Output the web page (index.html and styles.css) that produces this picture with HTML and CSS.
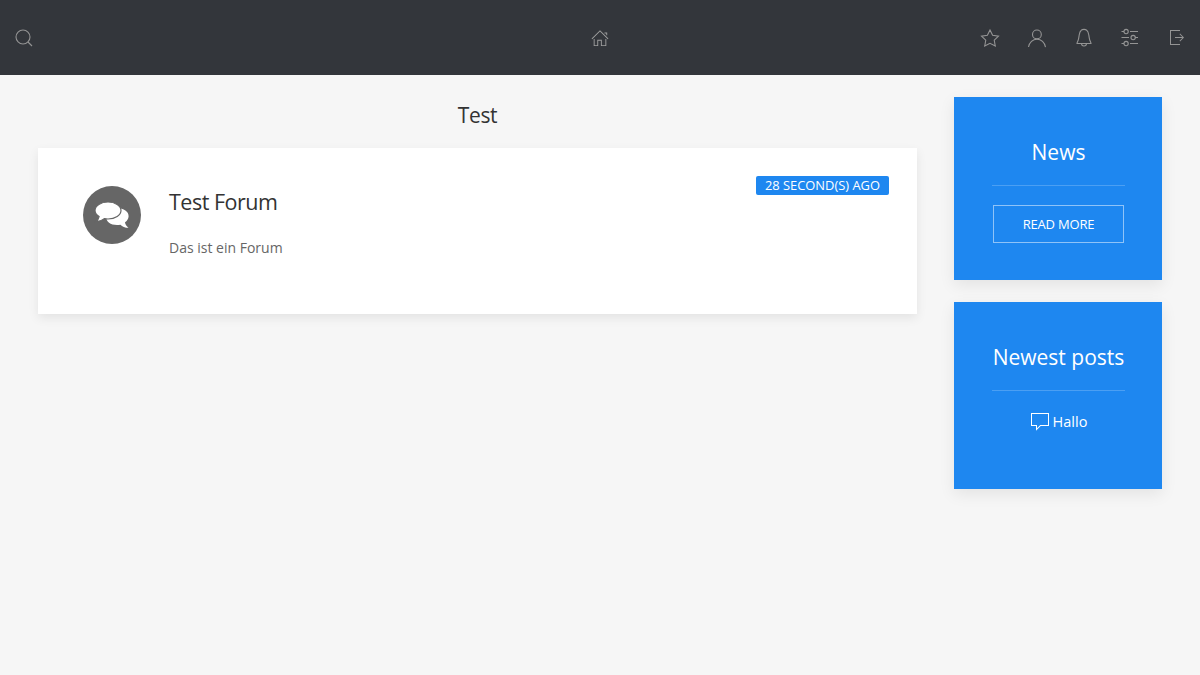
FILE: index.html
```html
<!DOCTYPE html>
<html lang="de">
<head>
<meta charset="utf-8">
<title>Test</title>
<link rel="stylesheet" href="styles.css">
</head>
<body>
<header class="topbar">
  <div class="nav-left">
    <svg class="icon" viewBox="0 0 20 20"><circle cx="9" cy="9" r="7"/><path d="M14 14l4 4"/></svg>
  </div>
  <div class="nav-center">
    <svg class="icon icon-solid icon-home" viewBox="0 0 20 20"><polygon points="18.65 11.35 10 2.71 1.35 11.35 0.65 10.65 10 1.29 19.35 10.65"/><polygon points="15 4 18 4 18 7 17 7 17 5 15 5"/><polygon points="3 11 4 11 4 18 7 18 7 12 12 12 12 18 16 18 16 11 17 11 17 19 11 19 11 13 8 13 8 19 3 19"/></svg>
  </div>
  <div class="nav-right">
    <svg class="icon" viewBox="0 0 20 20"><polygon points="10 2 12.63 7.27 18.5 8.12 14.25 12.22 15.25 18 10 15.27 4.75 18 5.75 12.22 1.5 8.12 7.37 7.27"/></svg>
    <svg class="icon" viewBox="0 0 20 20"><circle cx="9.900" cy="6.400" r="4.400"/><path d="M1.500 19C2.300 14.500 5.800 11.200 10 11.200C14.200 11.200 17.700 14.600 18.500 19.200"/></svg>
    <svg class="icon" viewBox="0 0 20 20"><path d="M17 15.500H3C3 14.600 3.800 13.300 4.100 12.500C4.600 11.300 4.700 10.400 5.200 7C5.500 4.500 5.900 3.200 7.300 2.200C8 1.600 9 1.400 10 1.400C11 1.400 11.900 1.600 12.700 2.200C14.100 3.200 14.400 4.500 14.800 7C15.300 10.400 15.400 11.300 15.900 12.500C16.200 13.300 17 14.600 17 15.500Z"/><path d="M12.500 15.500A2.500 2.500 0 0 1 7.500 15.500"/></svg>
    <svg class="icon" viewBox="0 0 20 20"><path d="M1.500 3.500h2.500M10 3.500h8M1.500 9.500h7.500M15 9.500h3M1.500 15.500h2.500M10 15.500h8"/><circle cx="6.110" cy="3.550" r="2.130"/><circle cx="13.150" cy="9.550" r="2.150"/><circle cx="6.110" cy="15.550" r="2.130"/></svg>
    <svg class="icon icon-solid icon-exit" viewBox="0 0 20 20"><polygon points="13.100 13.400 12.500 12.800 15.280 10 8 10 8 9 15.280 9 12.500 6.200 13.100 5.600 17 9.500"/><polygon points="13 2 3 2 3 17 13 17 13 16 4 16 4 3 13 3"/></svg>
  </div>
</header>
<main class="layout">
  <section class="content">
    <h1 class="page-title">Test</h1>
    <article class="forum-card">
      <div class="avatar">
        <svg class="avatar-icon" viewBox="0 0 34 26"><path class="bubble" d="M22 6C28.600 6 34 9.600 33.600 14.500C33.400 17 32 19 30 20.300C30.200 22.300 31.500 24.500 33.500 25.800C30 25.800 27.300 24.600 25.400 22.700C24.300 22.900 23.200 23 22 23C15.500 23 11 19.500 11 14.500C11 10 15.500 6 22 6Z"/><path class="bubble bubble-front" d="M13 0C20.200 0 26 3.800 26 8.500C26 13.200 20.200 17 13 17C11.700 17 10.500 16.900 9.300 16.600C7.300 18.400 4.500 19.600 .8 19.800C2.600 18.300 3.800 16.200 4.100 14.600C1.600 13 0 10.900 0 8.500C0 3.800 5.800 0 13 0Z"/></svg>
      </div>
      <div class="forum-body">
        <h2 class="forum-name">Test Forum</h2>
        <p class="forum-desc">Das ist ein Forum</p>
      </div>
      <span class="badge">28 SECOND(S) AGO</span>
    </article>
  </section>
  <aside class="sidebar">
    <div class="widget widget-news">
      <h3 class="widget-title">News</h3>
      <hr class="widget-rule">
      <a class="widget-button">READ MORE</a>
    </div>
    <div class="widget widget-posts">
      <h3 class="widget-title">Newest posts</h3>
      <hr class="widget-rule">
      <a class="post-link">
        <svg class="post-icon" viewBox="0 0 20 20"><path d="M6 18.710V14H1V1H19V14H10.710L6 18.710ZM2 13H7V16.290L10.290 13H18V2H2V13Z"/></svg>
        <span>Hallo</span>
      </a>
    </div>
  </aside>
</main>
</body>
</html>
```

FILE: styles.css
```css
* { box-sizing: border-box; }
html, body { margin: 0; height: 100%; }
body {
  background: #f6f6f6;
  font-family: "Open Sans", "Noto Sans", sans-serif;
  color: #333;
  overflow: hidden;
}
.topbar {
  height: 75px;
  background: #33363b;
  display: grid;
  grid-template-columns: 1fr auto 1fr;
  align-items: center;
  padding: 0 14px;
}
.nav-left, .nav-center, .nav-right { display: flex; align-items: center; }
.nav-right { justify-content: flex-end; gap: 26.7px; }
.icon {
  width: 20px;
  height: 20px;
  fill: none;
  stroke: #949494;
  stroke-width: 1.1;
}
.icon-solid { fill: #949494; stroke: none; }
.icon-home { width: 18px; height: 18px; fill: #a0a0a0; }
.icon-exit { margin-right: -1px; }
.layout {
  display: flex;
  gap: 37px;
  padding: 22px 38px 0 38px;
}
.content { flex: 1; min-width: 0; }
.page-title {
  margin: 0;
  height: 51px;
  padding-top: 2px;
  text-align: center;
  font-size: 21px;
  line-height: 32px;
  font-weight: 400;
  letter-spacing: -0.4px;
  color: #333;
}
.forum-card {
  position: relative;
  display: flex;
  height: 166px;
  padding: 38px 28px 0 45px;
  background: #fff;
  box-shadow: 0 4px 10px rgba(0, 0, 0, 0.08);
}
.avatar {
  width: 58px;
  height: 58px;
  flex: none;
  border-radius: 50%;
  background: #666;
  display: flex;
  align-items: center;
  justify-content: center;
}
.avatar-icon { width: 34px; height: 26px; overflow: visible; }
.bubble { fill: #fff; }
.bubble-front { stroke: #666; stroke-width: 1.2; }
.forum-body { margin-left: 28px; }
.forum-name {
  margin: 0;
  font-size: 21.5px;
  line-height: 32px;
  font-weight: 400;
  letter-spacing: -0.5px;
  color: #333;
}
.forum-desc {
  margin: 19px 0 0;
  font-size: 14px;
  line-height: 22px;
  color: #666;
}
.badge {
  position: absolute;
  top: 28px;
  right: 28px;
  height: 19px;
  padding: 0 9px;
  background: #1e87f0;
  color: #fff;
  font-size: 12.9px;
  line-height: 19px;
  border-radius: 2px;
}
.sidebar {
  width: 208px;
  flex: none;
  display: flex;
  flex-direction: column;
  gap: 22px;
}
.widget {
  background: #1e87f0;
  color: #fff;
  padding: 38px 37px 0 38px;
  text-align: center;
  box-shadow: 0 5px 15px rgba(0, 0, 0, 0.08);
}
.widget-news { height: 183px; }
.widget-posts { height: 187px; }
.widget-title {
  margin: 0;
  font-size: 21px;
  line-height: 34px;
  font-weight: 400;
}
.widget-rule {
  margin: 16px 0 0;
  border: 0;
  border-top: 1px solid rgba(255, 255, 255, 0.2);
}
.widget-button {
  display: block;
  margin: 19px 1px 0;
  height: 38px;
  line-height: 36px;
  border: 1px solid rgba(255, 255, 255, 0.5);
  font-size: 13px;
  letter-spacing: -0.2px;
  color: #fff;
}
.post-link {
  display: flex;
  align-items: center;
  justify-content: center;
  gap: 3px;
  margin-top: 19px;
  font-size: 14.500px;
  line-height: 24px;
  color: #fff;
}
.post-icon {
  width: 20px;
  height: 20px;
  fill: #fff;
}
```
